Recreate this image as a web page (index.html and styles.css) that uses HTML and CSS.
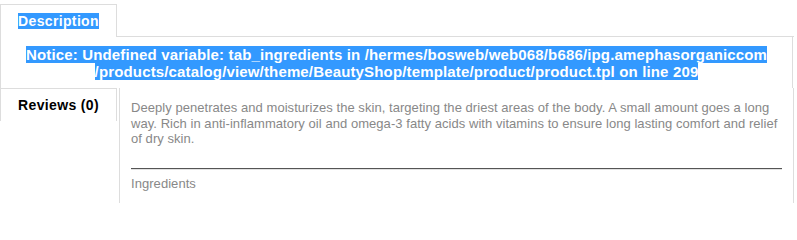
FILE: index.html
```html
<!DOCTYPE html>
<html>
<head>
<meta charset="utf-8">
<link rel="stylesheet" href="styles.css">
</head>
<body>
<div class="page">
  <div class="tabbar">
    <div class="tab tab-first"><span class="sel">Description</span></div>
    <div class="tabbar-fill"></div>
  </div>
  <div class="notice">
    <span class="sel"><b>Notice</b>: Undefined variable: tab_ingredients in <b>/hermes/bosweb/web068/b686/ipg.amephasorganiccom</b></span><br>
    <span class="sel"><b>/products/catalog/view/theme/BeautyShop/template/product/product.tpl</b> on line <b>209</b></span>
  </div>
  <div class="section">
    <div class="side">
      <div class="tab">Reviews (0)</div>
    </div>
    <div class="content">
      <p class="desc">Deeply penetrates and moisturizes the skin, targeting the driest areas of the body. A small amount goes a long way. Rich in anti-inflammatory oil and omega-3 fatty acids with vitamins to ensure long lasting comfort and relief of dry skin.</p>
      <hr class="rule">
      <p class="desc">Ingredients</p>
    </div>
  </div>
</div>
</body>
</html>
```

FILE: styles.css
```css
html, body {
  margin: 0;
  padding: 0;
  background: #fff;
}
body {
  font-family: "Liberation Sans", Arial, sans-serif;
}
.page {
  width: 794px;
  padding-top: 4px;
}
.tabbar {
  display: flex;
}
.tab {
  box-sizing: border-box;
  width: 117px;
  height: 33px;
  border: 1px solid #ddd;
  border-bottom: 0;
  text-align: center;
  font-weight: bold;
  font-size: 14px;
  letter-spacing: 0.35px;
  line-height: 32px;
  color: #000;
}
.tabbar-fill {
  flex: 1;
  border-bottom: 1px solid #ddd;
}
.sel {
  background: #3399ff;
  color: #fff;
}
.notice {
  box-sizing: border-box;
  width: 793px;
  border-left: 1px solid #ddd;
  border-right: 1px solid #ddd;
  padding: 9px 0 8px;
  text-align: center;
  font-weight: bold;
  font-size: 15px;
  letter-spacing: 0.15px;
  line-height: 17px;
}
.section {
  display: flex;
  gap: 2px;
}
.side {
  width: 117px;
  flex: none;
}
.content {
  flex: 1;
  border-left: 1px solid #ddd;
  border-right: 1px solid #ddd;
  padding: 12px 11px 0;
  min-height: 103px;
}
.desc {
  margin: 0;
  color: #888;
  font-size: 13px;
  letter-spacing: 0.05px;
  line-height: 15.5px;
}
.rule {
  margin: 21px 0 6px;
  height: 0;
  border: 0;
  border-top: 1px solid #555;
  border-bottom: 1px solid #e2e2e2;
}
```
